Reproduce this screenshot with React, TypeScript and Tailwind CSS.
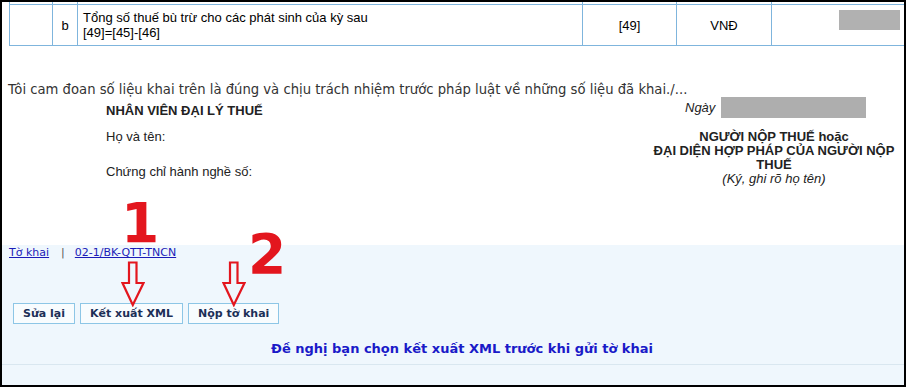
const COLS = [43, 25, 505, 94, 95, 133];

function DownArrow({ className = "" }: { className?: string }) {
  return (
    <svg
      className={className}
      width="24"
      height="46"
      viewBox="0 0 24 46"
      fill="none"
      aria-hidden="true"
    >
      <path
        d="M8 1.5 H15.5 V22 H22.5 L11.8 44 L1.5 22 H8 Z"
        stroke="#e3161e"
        strokeWidth="2.2"
        strokeLinejoin="miter"
      />
    </svg>
  );
}

function TaxRow() {
  return (
    <div className="ml-[7px]">
      {/* tail of the previous row */}
      <div className="flex h-[2px]">
        {COLS.map((w, i) => (
          <div
            key={i}
            className="border-l border-[#7fb5dd]"
            style={{ width: w }}
          />
        ))}
      </div>
      <div className="flex h-[42px] border-y border-[#7fb5dd] text-[13px] leading-[15px] text-black">
        <div className="w-[43px] border-l border-[#7fb5dd]" />
        <div className="flex w-[25px] items-center justify-center border-l border-[#7fb5dd] pt-[1px]">
          b
        </div>
        <div className="flex w-[505px] flex-col justify-center border-l border-[#7fb5dd] pl-[5px]">
          <span>Tổng số thuế bù trừ cho các phát sinh của kỳ sau</span>
          <span>[49]=[45]-[46]</span>
        </div>
        <div className="flex w-[94px] items-center justify-center border-l border-[#7fb5dd] pt-[1px]">
          [49]
        </div>
        <div className="flex w-[95px] items-center justify-center border-l border-[#7fb5dd] pt-[1px]">
          VNĐ
        </div>
        <div className="flex w-[133px] items-start justify-end border-l border-[#7fb5dd] pr-[4px] pt-[5px]">
          <div className="h-[20px] w-[61px] bg-[#b1b1b1]" />
        </div>
      </div>
    </div>
  );
}

function Signatures() {
  return (
    <div className="flex font-['Liberation_Sans',Arial,sans-serif] text-[13px] text-[#222]">
      <div className="ml-[104px] flex flex-col pt-[6px] leading-[16px]">
        <span className="font-bold">NHÂN VIÊN ĐẠI LÝ THUẾ</span>
        <span className="mt-[10px]">Họ và tên:</span>
        <span className="mt-[19px]">Chứng chỉ hành nghề số:</span>
      </div>
      <div className="ml-auto mr-[5px] flex w-[250px] flex-col">
        <div className="flex h-[21px] items-center pl-[36px]">
          <span className="italic">Ngày</span>
          <div className="ml-[6px] h-[21px] w-[145px] bg-[#aeaeae]" />
        </div>
        <div className="mt-[12px] text-center leading-[14px]">
          <div className="font-bold">NGƯỜI NỘP THUẾ hoặc</div>
          <div className="font-bold">ĐẠI DIỆN HỢP PHÁP CỦA NGƯỜI NỘP THUẾ</div>
          <div className="italic">(Ký, ghi rõ họ tên)</div>
        </div>
      </div>
    </div>
  );
}

function ActionButton({ label }: { label: string }) {
  return (
    <button className="h-[21px] border border-[#8dc6e6] bg-[#f8fcfe] px-[9px] font-['DejaVu_Sans',Verdana,sans-serif] text-[11px] font-bold leading-[19px] text-[#1c2f57]">
      {label}
    </button>
  );
}

export default function App() {
  return (
    <div className="relative h-[387px] w-[907px] overflow-hidden bg-white font-['Liberation_Sans',Arial,sans-serif]">
      <div className="flex h-[387px] w-[906px] flex-col border-2 border-black">
        {/* form body */}
        <div className="h-[243px]">
          <TaxRow />
          <p className="mt-[37px] pl-[6px] font-['DejaVu_Sans',Verdana,sans-serif] text-[13.2px] leading-[14px] text-[#333]">
            Tôi cam đoan số liệu khai trên là đúng và chịu trách nhiệm trước
            pháp luật về những số liệu đã khai./...
          </p>
          <Signatures />
        </div>

        {/* action panel */}
        <div className="flex flex-1 flex-col bg-[#eff7fd]">
          <div className="flex pl-[7px] pt-[1px] font-['DejaVu_Sans',Verdana,sans-serif] text-[11px] leading-[14px]">
            <a href="#" className="text-[#1b1bb8] underline">
              Tờ khai
            </a>
            <span className="ml-[12px] text-[#555]">|</span>
            <a href="#" className="ml-[10px] text-[#1b1bb8] underline">
              02-1/BK-QTT-TNCN
            </a>
          </div>
          <div className="mt-[43px] flex gap-[5px] pl-[11px]">
            <ActionButton label="Sửa lại" />
            <ActionButton label="Kết xuất XML" />
            <ActionButton label="Nộp tờ khai" />
          </div>
          <p className="mt-[17px] pl-[18px] text-center font-['DejaVu_Sans',Verdana,sans-serif] text-[13px] font-bold leading-[16px] text-[#1a1ac8]">
            Đề nghị bạn chọn kết xuất XML trước khi gửi tờ khai
          </p>
          <div className="mt-[7px] border-t border-[#d9e7f0]" />
        </div>
      </div>

      {/* red annotations */}
      <span className="absolute left-[121px] top-[202px] font-['DejaVu_Sans',Verdana,sans-serif] text-[55px] font-bold leading-[42px] text-[#e3161e]">
        1
      </span>
      <span className="absolute left-[248px] top-[233px] font-['DejaVu_Sans',Verdana,sans-serif] text-[55px] font-bold leading-[42px] text-[#e3161e]">
        2
      </span>
      <DownArrow className="absolute left-[121px] top-[261px]" />
      <DownArrow className="absolute left-[222px] top-[261px]" />
    </div>
  );
}
